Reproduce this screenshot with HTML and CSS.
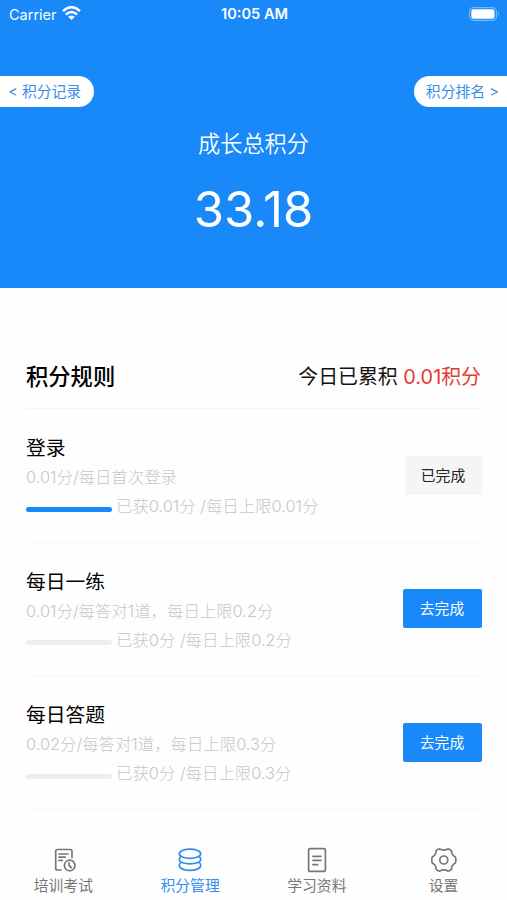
FILE: index.html
```html
<!DOCTYPE html>
<html lang="zh-CN">
<head>
<meta charset="utf-8">
<meta name="viewport" content="width=device-width, initial-scale=1">
<title>积分管理</title>
<link rel="stylesheet" href="styles.css">
</head>
<body>
<div class="app">
  <header class="hero">
    <div class="status">
      <div class="carrier"><span>Carrier</span>
        <svg class="wifi" width="19" height="14" viewBox="0 0 19 14" fill="none" stroke="#fff" stroke-width="2.5"><path d="M1 5.100Q9.500-2.500 18 5.100M3.900 8.500Q9.500 3.500 15.100 8.500"/><path d="M6.200 10.800Q9.500 8 12.800 10.800L9.500 14Z" fill="#fff" stroke="none"/></svg>
      </div>
      <span class="time">10:05 AM</span>
      <svg class="battery" width="31" height="14" viewBox="0 0 31 14"><rect x=".6" y=".6" width="26.800" height="12.800" rx="3.800" fill="none" stroke="#fff" stroke-opacity=".4" stroke-width="1.100"/><rect x="2.300" y="2.300" width="23.200" height="9.400" rx="2" fill="#fff"/><path d="M28.800 4.800Q31 7 28.800 9.200Z" fill="#fff" fill-opacity=".45"/></svg>
    </div>
    <nav class="links">
      <a class="pill pill-left">&lt; 积分记录</a>
      <a class="pill pill-right">积分排名 &gt;</a>
    </nav>
    <div class="total-label">成长总积分</div>
    <div class="total">33.18</div>
  </header>
  <main class="rules">
    <div class="rules-head">
      <h1>积分规则</h1>
      <div class="today">今日已累积 <span class="gain">0.01积分</span></div>
    </div>
    <section class="task">
      <div class="info">
        <h2>登录</h2>
        <p class="desc">0.01分/每日首次登录</p>
        <div class="progress"><i class="bar full"></i><span>已获0.01分 /每日上限0.01分</span></div>
      </div>
      <button class="btn done">已完成</button>
    </section>
    <section class="task">
      <div class="info">
        <h2>每日一练</h2>
        <p class="desc">0.01分/每答对1道，每日上限0.2分</p>
        <div class="progress"><i class="bar"></i><span>已获0分 /每日上限0.2分</span></div>
      </div>
      <button class="btn">去完成</button>
    </section>
    <section class="task">
      <div class="info">
        <h2>每日答题</h2>
        <p class="desc">0.02分/每答对1道，每日上限0.3分</p>
        <div class="progress"><i class="bar"></i><span>已获0分 /每日上限0.3分</span></div>
      </div>
      <button class="btn">去完成</button>
    </section>
  </main>
  <footer class="tabs">
    <a class="tab"><svg width="26" height="26" viewBox="0 0 26 26"><path d="M11 23H7.400Q5.700 23 5.700 21.300V4.200Q5.700 2.500 7.400 2.500H20.300Q22 2.500 22 4.200V10.500M9 7H18M9 10.200H15.200M9 13.400H12.300"/><circle cx="19.700" cy="18.500" r="5.300"/><path d="M19 15.800V18.300L21.300 20.700"/></svg><span>培训考试</span></a>
    <a class="tab active"><svg width="26" height="26" viewBox="0 0 26 26"><ellipse cx="13" cy="6.700" rx="10.700" ry="4.600"/><path d="M3.800 9.300Q2.300 10.500 2.300 12.400C2.300 18.300 23.700 18.300 23.700 12.400Q23.700 10.500 22.200 9.300M3.800 15.300Q2.300 16.500 2.300 18.400C2.300 25 23.700 25 23.700 18.400Q23.700 16.500 22.200 15.300"/></svg><span>积分管理</span></a>
    <a class="tab"><svg width="26" height="26" viewBox="0 0 26 26"><rect x="4.600" y="1.600" width="16.800" height="22.800" rx="1.700"/><path d="M9 9.300H17M9 13.400H17M9 17.700H13.600"/></svg><span>学习资料</span></a>
    <a class="tab"><svg width="26" height="26" viewBox="0 0 26 26"><path d="M8.700 1.900C10.800 3.500 14.800 3.500 16.900 1.900Q19.300 2 20.600 4C20.600 7 21.800 8.800 24.300 10Q25.500 13 24.300 16C21.800 17.200 20.600 19 20.600 22Q19.300 24 16.900 24.100C14.800 22.500 10.800 22.500 8.700 24.100Q6.300 24 5 22C5 19 3.800 17.200 1.300 16Q.1 13 1.300 10C3.800 8.800 5 7 5 4Q6.300 2 8.700 1.900Z"/><circle cx="12.800" cy="13" r="4"/></svg><span>设置</span></a>
  </footer>
</div>
</body>
</html>
```
FILE: styles.css
```css
* { box-sizing: border-box; }
body, h1, h2, p { margin: 0; }
body {
  background: #fefefe;
  color: #111;
  font-family: Inter, "Noto Sans CJK SC", sans-serif;
}
.app {
  display: flex;
  flex-direction: column;
  width: 507px;
  height: 900px;
  overflow: hidden;
}
.hero {
  flex: none;
  height: 288px;
  background: #1989fa;
  color: #fff;
  text-align: center;
}
.status {
  display: grid;
  grid-template-columns: 1fr auto 1fr;
  align-items: center;
  height: 27px;
  padding: 0 7px 0 9px;
  font-size: 14.5px;
  line-height: 27px;
}
.carrier { display: flex; align-items: center; gap: 5px; }
.wifi { margin-top: -2px; }
.time { padding-top: 1px; font-weight: 600; font-size: 14.6px; }
.battery { justify-self: end; }
.links { display: flex; justify-content: space-between; padding-top: 49px; }
.pill {
  height: 31px;
  background: #fff;
  color: #348ee9;
  font-size: 14.8px;
  line-height: 32px;
  white-space: nowrap;
}
.pill-left { width: 94px; padding-left: 8px; border-radius: 0 16px 16px 0; text-align: left; }
.pill-right { width: 93px; padding-right: 8px; border-radius: 16px 0 0 16px; text-align: right; }
.total-label { margin-top: 21px; font-size: 22.2px; line-height: 32px; font-weight: 350; }
.total { margin-top: 20px; font-size: 49px; line-height: 60px; }
.rules { flex: 1; padding: 56px 25px 0 26px; }
.rules-head {
  display: flex;
  align-items: center;
  justify-content: space-between;
  height: 65px;
  padding-top: 1px;
  border-bottom: 1px solid #f5f5f5;
}
h1 { font-size: 22.3px; line-height: 30px; font-weight: 500; color: #000; }
.today { padding-right: 1px; font-size: 19.9px; line-height: 30px; white-space: nowrap; }
.gain { color: #e43b30; }
.task {
  display: flex;
  align-items: center;
  justify-content: space-between;
  height: 133.6px;
  border-bottom: 1px solid #f7f7f7;
}
.info { padding-top: 3px; }
h2 { padding-top: 1px; font-size: 19.8px; line-height: 30px; font-weight: 400; color: #000; }
.desc, .progress { color: #c4c7cd; font-size: 16.4px; line-height: 29px; font-weight: 300; white-space: nowrap; }
.progress { display: flex; align-items: center; gap: 4px; }
.bar { width: 86px; height: 5px; margin-top: 5px; border-radius: 3px; background: #eee; }
.bar.full { background: #1989fa; }
.btn {
  width: 79px;
  height: 39px;
  padding: 1px 1px 0 0;
  border: 0;
  border-radius: 2px;
  background: #1989fa;
  color: #fff;
  font: 400 14.8px/38px Inter, "Noto Sans CJK SC", sans-serif;
}
.btn.done { width: 77px; background: #f5f5f5; color: #222; }
.tabs {
  flex: none;
  display: grid;
  grid-template-columns: repeat(4, 1fr);
  height: 63px;
  border-top: 1px solid #f8f8f8;
}
.tab {
  display: flex;
  flex-direction: column;
  align-items: center;
  padding-top: 9px;
  color: #777;
  font-size: 14.8px;
  line-height: 26px;
}
.tab svg { fill: none; stroke: currentColor; stroke-width: 1.7; stroke-linecap: round; stroke-linejoin: round; }
.tab.active { color: #318df0; }
```
